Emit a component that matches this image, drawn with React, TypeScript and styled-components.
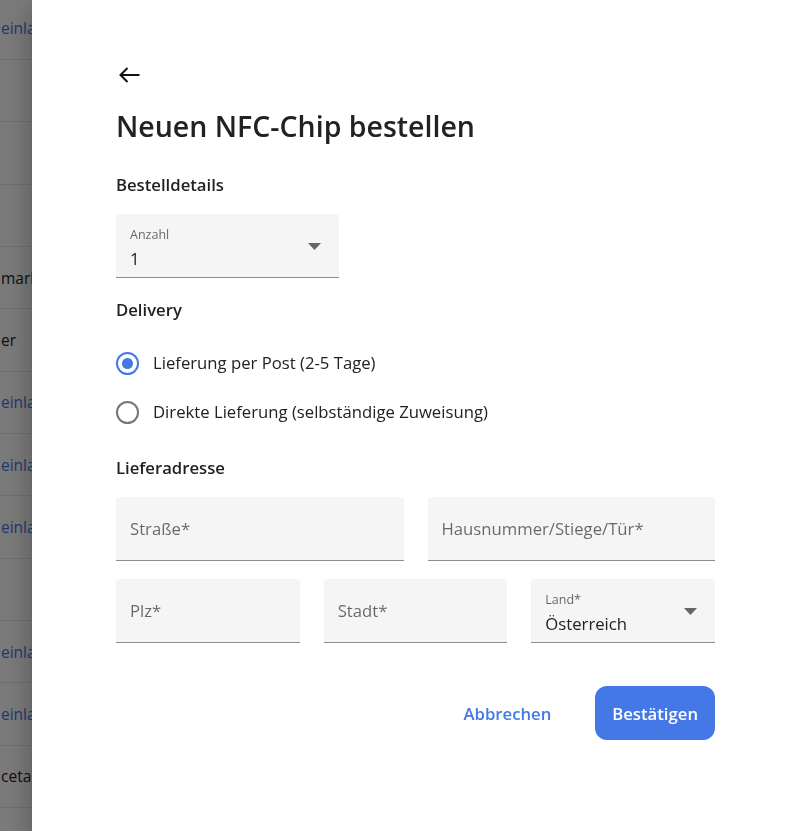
import styled, { createGlobalStyle } from 'styled-components';

const GlobalStyle = createGlobalStyle`
  html, body {
    margin: 0;
    padding: 0;
    height: 100%;
    overflow: hidden;
    font-family: "Open Sans", "Liberation Sans", sans-serif;
    color: rgba(0, 0, 0, 0.87);
    background: #ffffff;
  }
  * {
    box-sizing: border-box;
  }
`;

const BLUE = '#4378e6';

// Page behind the drawer
const PageList = styled.div`
  margin-top: -2.33px;
`;

const PageRow = styled.div`
  height: 62.33px;
  border-bottom: 1px solid #e6e6e6;
  display: flex;
  align-items: center;
  padding-left: 1px;
  font-size: 15.5px;
  white-space: nowrap;
`;

const PageCell = styled.span<{ $link?: boolean }>`
  color: ${(p) => (p.$link ? BLUE : '#222222')};
`;

const Backdrop = styled.div`
  position: fixed;
  inset: 0;
  background: rgba(0, 0, 0, 0.52);
`;

const Drawer = styled.aside`
  position: fixed;
  top: 0;
  right: 0;
  bottom: 0;
  width: 768px;
  background: #ffffff;
  box-shadow: 0 8px 10px -5px rgba(0, 0, 0, 0.2), 0 16px 24px 2px rgba(0, 0, 0, 0.14),
    0 6px 30px 5px rgba(0, 0, 0, 0.12);
  padding: 63px 85px 0 84px;
  display: flex;
  flex-direction: column;
`;

const BackButton = styled.button`
  width: 24px;
  height: 24px;
  padding: 0;
  border: none;
  background: none;
  display: flex;
  cursor: pointer;
  color: #111111;
`;

const Title = styled.h1`
  margin: 21px 0 0 0;
  font-size: 28.5px;
  line-height: 36px;
  font-weight: 600;
  color: #222222;
`;

const SectionTitle = styled.h2<{ $mt: number }>`
  margin: ${(p) => p.$mt}px 0 0 0;
  font-size: 16.7px;
  line-height: 24px;
  font-weight: 600;
  color: #222222;
`;

const FieldBox = styled.div<{ $width?: number }>`
  width: ${(p) => (p.$width ? `${p.$width}px` : 'auto')};
  height: 64px;
  background: #f5f5f5;
  border-radius: 4px 4px 0 0;
  border-bottom: 1px solid rgba(0, 0, 0, 0.42);
  display: flex;
  align-items: center;
  padding: 0 18px 0 14px;
  gap: 8px;
`;

const FieldContent = styled.div<{ $filled?: boolean }>`
  flex: 1;
  display: flex;
  flex-direction: column;
  align-self: stretch;
  justify-content: center;
  padding-top: ${(p) => (p.$filled ? '6px' : '0')};
`;

const FloatLabel = styled.span`
  font-size: 12.5px;
  line-height: 16px;
  color: rgba(0, 0, 0, 0.6);
`;

const FieldValue = styled.span`
  font-size: 16.7px;
  line-height: 24px;
  color: #222222;
  margin-top: 4px;
`;

const Placeholder = styled.span`
  font-size: 16.7px;
  line-height: 24px;
  color: rgba(0, 0, 0, 0.58);
`;

const SelectArrow = styled.svg`
  width: 13px;
  height: 7px;
  flex: none;
  margin-top: 2px;
`;

const RadioGroup = styled.div`
  margin-top: 20px;
  display: flex;
  flex-direction: column;
  gap: 7px;
`;

const RadioRow = styled.label`
  height: 42px;
  display: flex;
  align-items: center;
  gap: 14px;
  font-size: 16.7px;
  line-height: 24px;
  color: #222222;
  cursor: pointer;
`;

const RadioCircle = styled.span<{ $checked?: boolean }>`
  width: 23px;
  height: 23px;
  border-radius: 50%;
  border: 2px solid ${(p) => (p.$checked ? BLUE : '#757575')};
  display: flex;
  align-items: center;
  justify-content: center;
  flex: none;
  &::after {
    content: '';
    width: 11px;
    height: 11px;
    border-radius: 50%;
    background: ${BLUE};
    display: ${(p) => (p.$checked ? 'block' : 'none')};
  }
`;

const Grid = styled.div<{ $cols: number; $mt: number }>`
  margin-top: ${(p) => p.$mt}px;
  display: grid;
  grid-template-columns: repeat(${(p) => p.$cols}, 1fr);
  gap: 24px;
`;

const SelectRow = styled.div`
  margin-top: 17px;
  display: flex;
`;

const Actions = styled.div`
  margin-top: 43px;
  display: flex;
  justify-content: flex-end;
  align-items: center;
  gap: 27px;
`;

const ActionButton = styled.button<{ $primary?: boolean }>`
  height: 54px;
  padding: 0 17px;
  border: none;
  border-radius: 12px;
  font-family: inherit;
  font-size: 16.7px;
  font-weight: 600;
  background: ${(p) => (p.$primary ? BLUE : 'transparent')};
  color: ${(p) => (p.$primary ? '#ffffff' : BLUE)};
  cursor: pointer;
`;

const pageRows: { text?: string; link?: boolean }[] = [
  { text: 'einladen', link: true },
  {},
  {},
  {},
  { text: 'marketing' },
  { text: 'er' },
  { text: 'einladen', link: true },
  { text: 'einladen', link: true },
  { text: 'einladen', link: true },
  {},
  { text: 'einladen', link: true },
  { text: 'einladen', link: true },
  { text: 'cetamol' },
  {},
];

function DropArrow() {
  return (
    <SelectArrow viewBox="0 0 13 7">
      <path d="M0 0 L13 0 L6.5 7 Z" fill="#666666" />
    </SelectArrow>
  );
}

function TextField({ label }: { label: string }) {
  return (
    <FieldBox>
      <FieldContent>
        <Placeholder>{label}</Placeholder>
      </FieldContent>
    </FieldBox>
  );
}

function SelectField({ label, value, width }: { label: string; value: string; width?: number }) {
  return (
    <FieldBox $width={width}>
      <FieldContent $filled>
        <FloatLabel>{label}</FloatLabel>
        <FieldValue>{value}</FieldValue>
      </FieldContent>
      <DropArrow />
    </FieldBox>
  );
}

export default function App() {
  return (
    <>
      <GlobalStyle />
      <PageList>
        {pageRows.map((row, i) => (
          <PageRow key={i}>
            {row.text && <PageCell $link={row.link}>{row.text}</PageCell>}
          </PageRow>
        ))}
      </PageList>
      <Backdrop />
      <Drawer>
        <BackButton aria-label="Zurück">
          <svg width="24" height="24" viewBox="0 0 24 24" fill="none">
            <path d="M4.5 12 H23.5 M11.5 5 L4.5 12 L11.5 19" stroke="#111111" strokeWidth="2" />
          </svg>
        </BackButton>
        <Title>Neuen NFC-Chip bestellen</Title>

        <SectionTitle $mt={29}>Bestelldetails</SectionTitle>
        <SelectRow>
          <SelectField label="Anzahl" value="1" width={223} />
        </SelectRow>

        <SectionTitle $mt={20}>Delivery</SectionTitle>
        <RadioGroup>
          <RadioRow>
            <RadioCircle $checked />
            Lieferung per Post (2-5 Tage)
          </RadioRow>
          <RadioRow>
            <RadioCircle />
            Direkte Lieferung (selbständige Zuweisung)
          </RadioRow>
        </RadioGroup>

        <SectionTitle $mt={23}>Lieferadresse</SectionTitle>
        <Grid $cols={2} $mt={17}>
          <TextField label="Straße*" />
          <TextField label="Hausnummer/Stiege/Tür*" />
        </Grid>
        <Grid $cols={3} $mt={18}>
          <TextField label="Plz*" />
          <TextField label="Stadt*" />
          <SelectField label="Land*" value="Österreich" />
        </Grid>

        <Actions>
          <ActionButton>Abbrechen</ActionButton>
          <ActionButton $primary>Bestätigen</ActionButton>
        </Actions>
      </Drawer>
    </>
  );
}
